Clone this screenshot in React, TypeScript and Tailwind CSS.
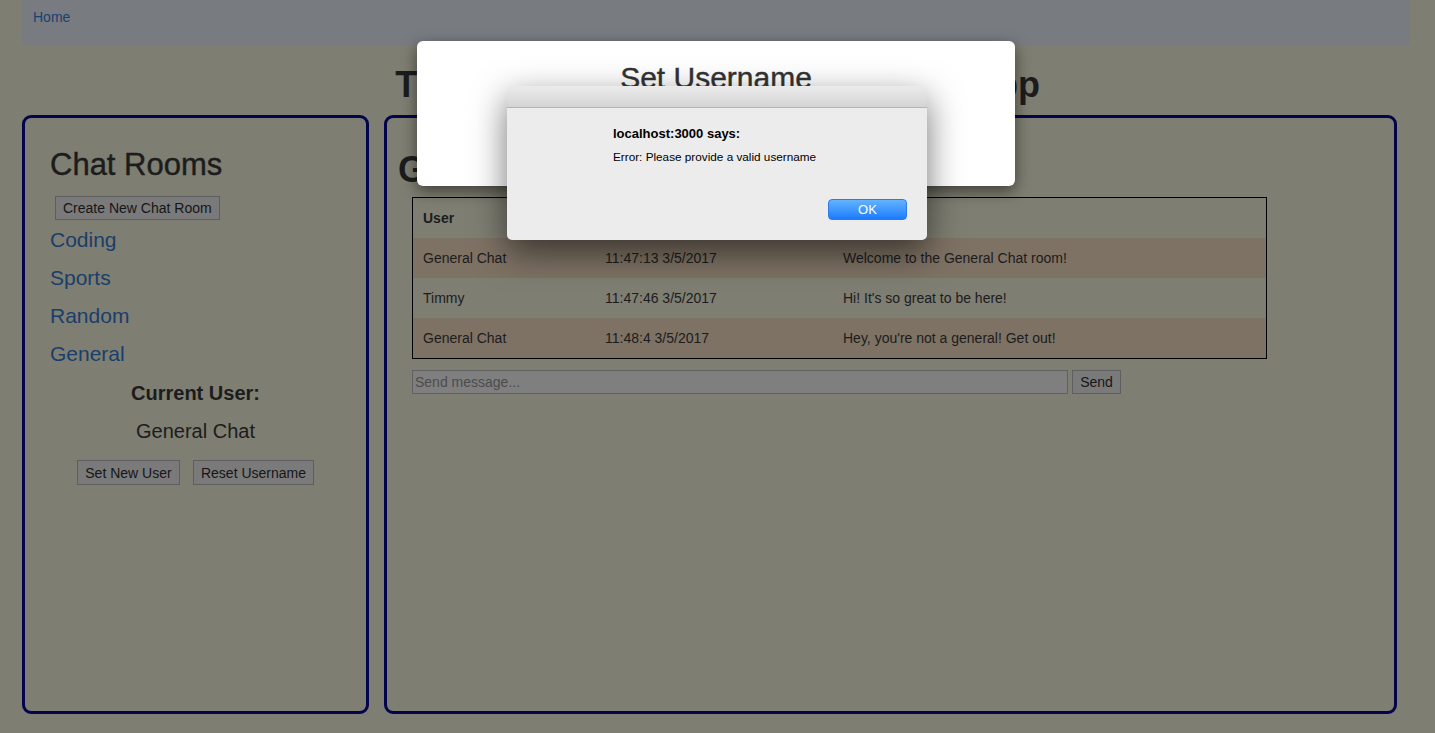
const rooms = ["Coding", "Sports", "Random", "General"]

const messages = [
  { user: "General Chat", time: "11:47:13 3/5/2017", text: "Welcome to the General Chat room!" },
  { user: "Timmy", time: "11:47:46 3/5/2017", text: "Hi! It's so great to be here!" },
  { user: "General Chat", time: "11:48:4 3/5/2017", text: "Hey, you're not a general! Get out!" },
]

function GrayButton({ children, className = "" }: { children: React.ReactNode; className?: string }) {
  return (
    <button
      className={`flex items-center justify-center whitespace-nowrap px-[7px] border border-[#5e5e5e] bg-[#7a7a7a] text-[14px] leading-[16px] text-[#161616] ${className}`}
    >
      {children}
    </button>
  )
}

export default function App() {
  return (
    <div className="relative min-h-screen w-full bg-[#7e7e72] font-['Liberation_Sans',Arial,sans-serif] text-[#1c1c1c]">
      {/* Nav */}
      <nav className="ml-[22px] h-[45px] w-[1388px] rounded-b-[4px] bg-[#787b80] px-[11px] pt-[9px] leading-[16px]">
        <a className="block text-[14px] leading-[16px] text-[#1c416f]">Home</a>
      </nav>

      <h1 className="mt-[20px] text-center text-[36px] leading-[40px] font-bold">
        The Ultimate React.js Chat Room App
      </h1>

      <div className="mt-[10px] flex gap-[15px] px-[22px]">
        {/* Rooms sidebar */}
        <aside className="w-[347px] h-[599px] rounded-[9px] border-[3px] border-[#04044d] px-[25px] pt-[30px]">
          <h2 className="text-[31px] leading-[34px] [-webkit-text-stroke:0.4px_#1c1c1c]">Chat Rooms</h2>
          <GrayButton className="mt-[14px] ml-[5px] h-[24px]">Create New Chat Room</GrayButton>
          <ul className="mt-[1px]">
            {rooms.map((room) => (
              <li key={room} className="h-[38px] text-[21px] leading-[38px] text-[#1a3e6b]">
                {room}
              </li>
            ))}
          </ul>
          <div className="mt-[6px] text-center">
            <p className="text-[20px] leading-[28px] font-bold">Current User:</p>
            <p className="mt-[10px] text-[20px] leading-[28px]">General Chat</p>
            <div className="mt-[15px] flex justify-center gap-[13px]">
              <GrayButton className="h-[25px] w-[103px]">Set New User</GrayButton>
              <GrayButton className="h-[25px] min-w-[121px]">Reset Username</GrayButton>
            </div>
          </div>
        </aside>

        {/* Chat area */}
        <main className="w-[1013px] h-[599px] rounded-[9px] border-[3px] border-[#04044d] pl-[11px] pt-[30px]">
          <h1 className="text-[36px] leading-[43px] font-bold">General Chat</h1>
          <div className="ml-[14px] mt-[6px] w-[855px] border border-black">
            <div className="grid h-[40px] grid-cols-[182px_238px_1fr] items-center pl-[10px] text-[14px] font-bold">
              <span>User</span>
              <span>Time</span>
              <span>Message</span>
            </div>
            {messages.map((m, i) => (
              <div
                key={i}
                className={`grid h-[40px] grid-cols-[182px_238px_1fr] items-center pl-[10px] text-[14px] ${
                  i % 2 === 0 ? "bg-[#7e7264]" : ""
                }`}
              >
                <span>{m.user}</span>
                <span>{m.time}</span>
                <span>{m.text}</span>
              </div>
            ))}
          </div>
          <div className="ml-[14px] mt-[11px] flex gap-[4px]">
            <input
              placeholder="Send message..."
              className="h-[24px] w-[656px] border border-[#606060] bg-[#7f7f7f] px-[2px] text-[14px] placeholder:text-[#4c4c4c] outline-none"
            />
            <GrayButton className="h-[24px] w-[49px]">Send</GrayButton>
          </div>
        </main>
      </div>

      {/* Set Username modal */}
      <div className="absolute left-[417px] top-[41px] h-[145px] w-[598px] rounded-[6px] bg-white pt-[20px] shadow-[0_5px_15px_rgba(0,0,0,0.5)]">
        <h3 className="text-center text-[30px] leading-[34px] text-[#333] [-webkit-text-stroke:0.4px_#333]">Set Username</h3>
      </div>

      {/* Browser alert */}
      <div className="absolute left-[507px] top-[86px] h-[154px] w-[420px] overflow-hidden rounded-[5px] bg-[#ececec] shadow-[0_12px_35px_rgba(0,0,0,0.55)]">
        <div className="h-[22px] border-b border-[#b4b4b4] bg-linear-to-b from-[#ebebeb] to-[#d4d4d4]" />
        <div className="pl-[106px] pt-[18px] text-black">
          <p className="text-[13px] leading-[16px] font-bold">localhost:3000 says:</p>
          <p className="mt-[8px] text-[11.75px] leading-[14px]">Error: Please provide a valid username</p>
        </div>
        <div className="mt-[35px] flex justify-end pr-[20px]">
          <button className="h-[21px] w-[79px] rounded-[4px] border border-[#2a7bea] bg-linear-to-b from-[#63b3ff] to-[#1a7bfd] text-[13px] leading-[16px] text-white">
            OK
          </button>
        </div>
      </div>
    </div>
  )
}
